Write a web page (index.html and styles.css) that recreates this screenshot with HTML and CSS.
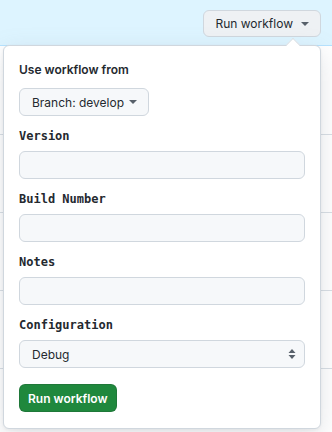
FILE: index.html
```html
<!DOCTYPE html>
<html>
<head>
<meta charset="utf-8">
<link rel="stylesheet" href="styles.css">
</head>
<body>
<div class="page">
  <div class="banner">
    <button class="btn btn-top">Run workflow <span class="caret"></span></button>
  </div>
  <div class="rows">
    <div class="row"></div>
    <div class="row"></div>
    <div class="row"></div>
    <div class="row"></div>
    <div class="row"></div>
  </div>
  <div class="popup">
    <div class="notch"></div>
    <div class="title">Use workflow from</div>
    <button class="btn btn-branch">Branch: develop <span class="caret"></span></button>
    <div class="field">
      <label class="label">Version</label>
      <div class="input"></div>
    </div>
    <div class="field">
      <label class="label">Build Number</label>
      <div class="input"></div>
    </div>
    <div class="field">
      <label class="label">Notes</label>
      <div class="input"></div>
    </div>
    <div class="field">
      <label class="label">Configuration</label>
      <div class="input select">
        <span>Debug</span>
        <svg class="updown" width="8" height="12" viewBox="0 0 8 12"><path d="M4 1L7.5 5H0.5Z M4 11L0.5 7H7.5Z" fill="#57606a"/></svg>
      </div>
    </div>
    <button class="btn btn-primary">Run workflow</button>
  </div>
</div>
</body>
</html>
```

FILE: styles.css
```css
* { box-sizing: border-box; }
html, body { margin: 0; padding: 0; }
body {
  width: 332px;
  height: 432px;
  overflow: hidden;
  background: #ffffff;
  font-family: Inter, "Liberation Sans", Arial, sans-serif;
  color: #24292f;
}
.page { position: relative; width: 332px; height: 432px; }
.banner {
  height: 46px;
  background: #ddf4ff;
  border-bottom: 1px solid #b6e3ff;
  display: flex;
  justify-content: flex-end;
  align-items: flex-start;
  padding: 10px 11px 0 0;
}
.rows { display: flex; flex-direction: column; }
.row { height: 78px; border-bottom: 1px solid #d8dee4; flex: none; }
.rows .row:first-child { height: 89px; }
.btn {
  font-family: inherit;
  border: 1px solid #d0d7de;
  border-radius: 6px;
  background: #f6f8fa;
  color: #24292f;
  font-size: 12px;
  height: 28px;
  padding: 0 12px;
  display: inline-flex;
  align-items: center;
  gap: 6px;
  cursor: pointer;
}
.btn-top { height: 27px; background: #eef1f4; border-color: #d0d7de; padding: 0 11px 0 11px; gap: 8px; }
.caret {
  width: 0; height: 0;
  border-left: 4px solid transparent;
  border-right: 4px solid transparent;
  border-top: 4px solid #57606a;
  display: inline-block;
}
.popup {
  position: absolute;
  left: 3px;
  top: 45px;
  width: 318px;
  height: 384px;
  background: #fff;
  border: 1px solid #d0d7de;
  border-radius: 6px;
  box-shadow: 0 8px 24px rgba(140,149,159,0.25), 0 1px 3px rgba(31,35,40,0.06);
  padding: 15px;
  display: flex;
  flex-direction: column;
  align-items: flex-start;
}
.notch {
  position: absolute;
  top: -8px;
  left: 282px;
  width: 14px;
  height: 14px;
  background: #fff;
  border-left: 1px solid #d0d7de;
  border-top: 1px solid #d0d7de;
  transform: rotate(45deg) scale(0.7, 0.7);
}
.title { font-size: 12px; font-weight: 600; line-height: 18px; }
.btn-branch { margin-top: 9px; padding: 0 11px 0 12px; gap: 5px; }
.field { width: 100%; margin-top: 11px; display: flex; flex-direction: column; }
.label {
  font-family: "DejaVu Sans Mono", "Liberation Mono", monospace;
  font-size: 12px;
  font-weight: bold;
  line-height: 18px;
  margin-bottom: 6px;
}
.input {
  height: 28px;
  width: 100%;
  background: #f6f8fa;
  border: 1px solid #d0d7de;
  border-radius: 6px;
}
.select {
  display: flex;
  align-items: center;
  justify-content: space-between;
  padding: 0 8px 0 12px;
  font-size: 12px;
}
.btn-primary {
  margin-top: 16px;
  background: #1f883d;
  border-color: rgba(31,35,40,0.15);
  color: #fff;
  font-weight: 600;
  padding: 0 8px;
}
```
